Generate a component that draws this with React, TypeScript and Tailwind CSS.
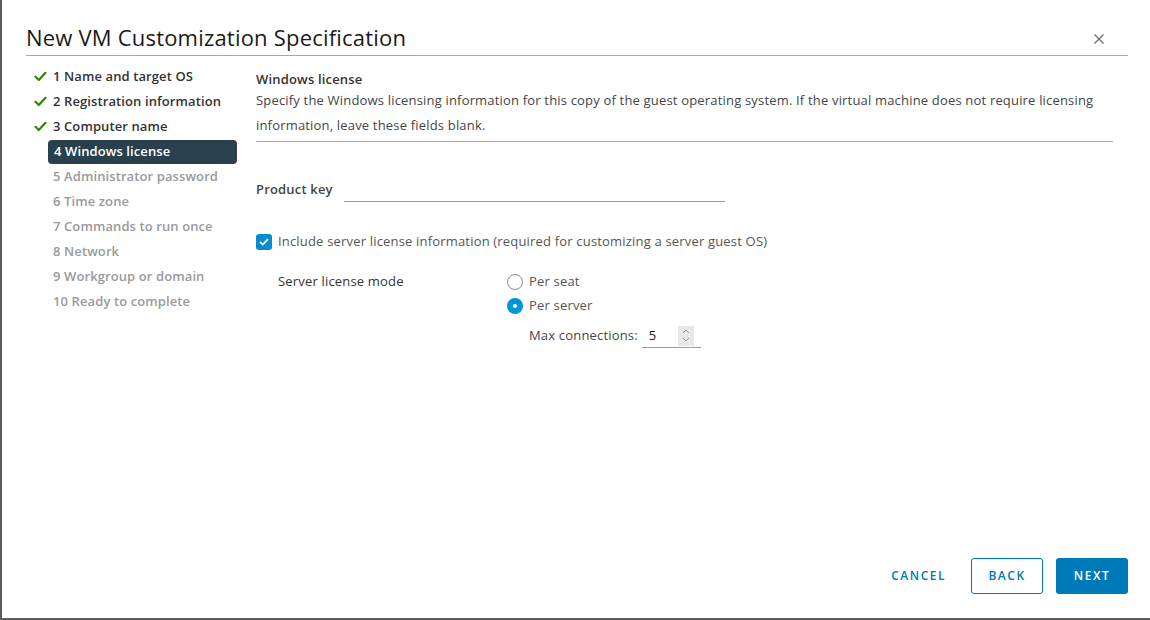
import { useState } from "react";

const steps = [
  { n: 1, label: "Name and target OS", state: "done" },
  { n: 2, label: "Registration information", state: "done" },
  { n: 3, label: "Computer name", state: "done" },
  { n: 4, label: "Windows license", state: "active" },
  { n: 5, label: "Administrator password", state: "todo" },
  { n: 6, label: "Time zone", state: "todo" },
  { n: 7, label: "Commands to run once", state: "todo" },
  { n: 8, label: "Network", state: "todo" },
  { n: 9, label: "Workgroup or domain", state: "todo" },
  { n: 10, label: "Ready to complete", state: "todo" },
];

const Check = () => (
  <svg width="13" height="11" viewBox="0 0 13 11">
    <path d="M1.5 5.8 L4.8 9 L11.5 1.8" fill="none" stroke="#318700" strokeWidth="2.2" strokeLinecap="round" strokeLinejoin="round" />
  </svg>
);

export default function App() {
  const [includeServer, setIncludeServer] = useState(true);
  const [mode, setMode] = useState("server");
  const [maxConn, setMaxConn] = useState(5);

  return (
    <div
      className="w-[1150px] h-[620px] bg-white border-l-2 border-b-2 border-[#5c5c5c] flex flex-col text-[#454545]"
      style={{ fontFamily: "'Open Sans', 'Liberation Sans', sans-serif" }}
    >
      {/* Header */}
      <div className="pt-[22px] pl-[24px] pr-[22px]">
        <div className="flex items-center justify-between border-b border-[#a8a8a8] pb-[3px]">
          <h1 className="text-[22px] leading-[30px] text-[#1a1a1a] tracking-[0.2px]">New VM Customization Specification</h1>
          <button className="mr-[23px] mt-[3px]">
            <svg width="12" height="12" viewBox="0 0 12 12">
              <path d="M1.5 1.5 L10.5 10.5 M10.5 1.5 L1.5 10.5" stroke="#6e6e6e" strokeWidth="1.3" />
            </svg>
          </button>
        </div>
      </div>

      {/* Body */}
      <div className="flex flex-1 pl-[24px] pr-[37px]">
        {/* Steps */}
        <div className="w-[230px] pt-[8px] flex flex-col tracking-[0.1px]">
          {steps.map((s) => (
            <div key={s.n} className="flex items-center h-[25px]">
              <div className="w-[22px] flex items-center justify-start pl-[8px]">
                {s.state === "done" && <Check />}
              </div>
              <div
                className={
                  s.state === "active"
                    ? "w-[189px] h-[24px] flex items-center pl-[6px] rounded-[4px] bg-[#29404e] text-white text-[13px] font-semibold"
                    : s.state === "done"
                    ? "w-[189px] h-[24px] flex items-center pl-[5px] text-[#333333] text-[13px] font-semibold"
                    : "w-[189px] h-[24px] flex items-center pl-[5px] text-[#9a9a9a] text-[13px] font-semibold"
                }
              >
                {s.n} {s.label}
              </div>
            </div>
          ))}
        </div>

        {/* Content */}
        <div className="flex-1 pt-[14px] text-[13px] tracking-[0.18px]">
          <h2 className="font-semibold leading-[18px] text-[#333333]">Windows license</h2>
          <p className="leading-[25px] pb-[3px] border-b border-[#a8a8a8] text-[#454545]">
            Specify the Windows licensing information for this copy of the guest operating system. If the virtual machine does not require licensing information, leave these fields blank.
          </p>

          <div className="flex items-center mt-[36px] h-[24px]">
            <label className="w-[88px] font-semibold text-[#454545]">Product key</label>
            <input className="w-[381px] h-[24px] border-b border-[#9a9a9a] outline-none" />
          </div>

          <label className="flex items-center gap-[6px] mt-[28px] h-[24px] cursor-pointer">
            <span
              onClick={() => setIncludeServer(!includeServer)}
              className={
                includeServer
                  ? "w-[16px] h-[16px] rounded-[3px] bg-[#0a8ad2] flex items-center justify-center"
                  : "w-[16px] h-[16px] rounded-[3px] border border-[#8c8c8c] bg-white"
              }
            >
              {includeServer && (
                <svg width="10" height="8" viewBox="0 0 10 8">
                  <path d="M1 4 L3.8 6.6 L9 1.2" fill="none" stroke="white" strokeWidth="1.8" />
                </svg>
              )}
            </span>
            <span className="text-[#565656]">Include server license information (required for customizing a server guest OS)</span>
          </label>

          <div className="flex mt-[16px] pl-[22px]">
            <div className="w-[229px] h-[24px] flex items-center text-[#333333]">Server license mode</div>
            <div className="flex flex-col">
              {[
                { id: "seat", label: "Per seat" },
                { id: "server", label: "Per server" },
              ].map((r) => (
                <div key={r.id} className="flex items-center gap-[6px] h-[24px] cursor-pointer" onClick={() => setMode(r.id)}>
                  {mode === r.id ? (
                    <span className="w-[16px] h-[16px] rounded-full bg-[#0095d3] flex items-center justify-center">
                      <span className="w-[4px] h-[4px] rounded-full bg-white" />
                    </span>
                  ) : (
                    <span className="w-[16px] h-[16px] rounded-full border border-[#8c8c8c] bg-white" />
                  )}
                  <span className="text-[#565656]">{r.label}</span>
                </div>
              ))}
              <div className="flex items-center ml-[22px] mt-[6px] h-[24px]">
                <span className="text-[#454545] mr-[4px]">Max connections:</span>
                <div className="flex items-center w-[59px] h-[24px] border-b border-[#9a9a9a] pl-[7px]">
                  <span className="flex-1 text-[#1a1a1a]">{maxConn}</span>
                  <div className="w-[16px] h-[20px] bg-[#e8e8ec] flex flex-col items-center justify-center gap-[3px] mr-[7px]">
                    <svg width="8" height="5" viewBox="0 0 8 5" onClick={() => setMaxConn(maxConn + 1)}>
                      <path d="M1 4 L4 1 L7 4" fill="none" stroke="#9a9a9a" strokeWidth="1" />
                    </svg>
                    <svg width="8" height="5" viewBox="0 0 8 5" onClick={() => setMaxConn(Math.max(1, maxConn - 1))}>
                      <path d="M1 1 L4 4 L7 1" fill="none" stroke="#9a9a9a" strokeWidth="1" />
                    </svg>
                  </div>
                </div>
              </div>
            </div>
          </div>
        </div>
      </div>

      {/* Footer */}
      <div className="flex justify-end items-center gap-[13px] pr-[22px] pb-[24px]">
        <button className="h-[36px] px-[12px] text-[12px] font-semibold tracking-[1.5px] text-[#0079b8]">CANCEL</button>
        <button className="h-[36px] w-[72px] rounded-[3px] border border-[#0079b8] text-[12px] font-semibold tracking-[1.5px] text-[#0079b8]">BACK</button>
        <button className="h-[36px] w-[72px] rounded-[3px] bg-[#0079b8] text-[12px] font-semibold tracking-[1.5px] text-white">NEXT</button>
      </div>
    </div>
  );
}
